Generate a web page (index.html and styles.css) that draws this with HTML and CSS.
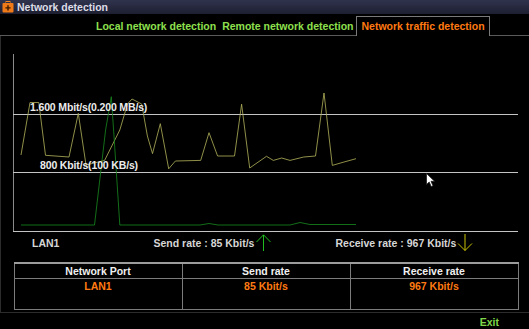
FILE: index.html
```html
<!DOCTYPE html>
<html>
<head>
<meta charset="utf-8">
<link rel="stylesheet" href="styles.css">
</head>
<body>
<div class="screen">
  <div class="titlebar">
    <svg class="app-icon" viewBox="0 0 12 12" width="12" height="12">
      <rect x="4" y="0.5" width="4" height="2" fill="none" stroke="#f08020"/>
      <rect x="0.5" y="2" width="11" height="9.5" rx="1" fill="#f07a18"/>
      <path d="M6 4.3v5.2M3.4 6.9h5.2" stroke="#3a1800" stroke-width="1.4"/>
    </svg>
    <span class="title">Network detection</span>
  </div>
  <div class="tabs">
    <div class="tab-lead"></div>
    <div class="tab">Local network detection</div>
    <div class="tab">Remote network detection</div>
    <div class="tab active">Network traffic detection</div>
    <div class="tab-fill"></div>
  </div>
  <div class="panel">
    <svg class="chart" viewBox="0 36 529 198" width="529" height="198">
      <line x1="13.5" y1="54" x2="13.5" y2="231" stroke="#8a8a8a"/>
      <line x1="13" y1="114.5" x2="518" y2="114.5" stroke="#c4c4c4"/>
      <line x1="13" y1="172.5" x2="518" y2="172.5" stroke="#c4c4c4"/>
      <line x1="13" y1="231.5" x2="518" y2="231.5" stroke="#c4c4c4"/>
      <polyline class="recv-line" points="21,155 30,102.5 38.8,102.5 45.5,155.3 69,157 78.3,113.3 86,165 104.6,160.4 119.8,130 127.5,104 132,99 141.7,104 147.4,136 152.5,153.6 160.3,123.7 168.7,168.8 175.4,161 200.7,160.4 209,132.7 217.6,156 234.5,156 241.6,104.2 249.7,168 266.5,156.3 273.3,160.4 281.7,158 290,160.4 303.7,157 315.5,156 324,93 332.3,165.4 344,162 356,158.7"/>
      <polyline class="send-line" points="21,225 94.5,225 105.6,130 111.3,96.7 114,136 119.8,225 200,225 209,223.5 218,225 290,225 300,222.5 310,224.5 356,224.5"/>
      <text class="scale" x="30" y="111">1.600 Mbit/s(0.200 MB/s)</text>
      <text class="scale" x="40" y="169">800 Kbit/s(100 KB/s)</text>
    </svg>
    <div class="stats">
      <span class="stat stat-port">LAN1</span>
      <span class="stat stat-send">Send rate : 85 Kbit/s<svg class="arrow" viewBox="0 0 17 17" width="17" height="17"><path d="M8.5 1V17M1.5 8L8.5 0.8L15.5 8" fill="none" stroke="#22d022" stroke-width="0.9"/></svg></span>
      <span class="stat stat-recv">Receive rate : 967 Kbit/s<svg class="arrow" viewBox="0 0 17 17" width="17" height="17"><path d="M8 0V16.5M1 9.5L8 16.5L15 9.5" fill="none" stroke="#e0d800" stroke-width="0.9"/></svg></span>
    </div>
    <table class="rates">
      <thead>
        <tr><th>Network Port</th><th>Send rate</th><th>Receive rate</th></tr>
      </thead>
      <tbody>
        <tr><td>LAN1</td><td>85 Kbit/s</td><td>967 Kbit/s</td></tr>
      </tbody>
    </table>
  </div>
  <div class="footer"><span class="exit">Exit</span></div>
  <svg class="cursor" viewBox="0 0 10 15" width="10" height="15">
    <path d="M0.5 0.5L0.5 11.5L3.2 9L5.2 13.6L7 12.8L5 8.3L8.6 8.3Z" fill="#ffffff" stroke="#202020" stroke-width="0.8"/>
  </svg>
</div>
</body>
</html>
```
FILE: styles.css
```css
html, body {
  margin: 0;
  padding: 0;
  background: #000;
}
.screen {
  position: relative;
  width: 529px;
  height: 329px;
  overflow: hidden;
  background: #000;
  font: bold 10.5px "Liberation Sans", Arial, sans-serif;
  color: #e0e0e0;
}
.titlebar {
  height: 14px;
  display: flex;
  align-items: center;
  background: linear-gradient(#30334d, #1d1f31);
}
.app-icon {
  display: block;
  margin-left: 2px;
}
.title {
  margin-left: 3px;
  color: #dcdce6;
  line-height: 14px;
}
.tabs {
  display: flex;
  height: 22px;
  align-items: flex-end;
}
.tab-lead {
  width: 93px;
  height: 20px;
  box-sizing: border-box;
  border-bottom: 1px solid #5a5a5a;
}
.tab {
  height: 20px;
  box-sizing: border-box;
  padding: 0 3px;
  line-height: 20px;
  color: #8fe04e;
  border-bottom: 1px solid #5a5a5a;
  white-space: nowrap;
}
.tab.active {
  color: #ff7a12;
  padding: 0 4px;
  border: 1px solid #7a7a7a;
  border-bottom: none;
  line-height: 19px;
}
.tab-fill {
  flex: 1;
  height: 20px;
  box-sizing: border-box;
  border-bottom: 1px solid #5a5a5a;
}
.panel {
  height: 276px;
  box-sizing: content-box;
  border-left: 1px solid #2c2c2c;
  border-bottom: 1px solid #2c2c2c;
}
.chart {
  display: block;
  margin-left: -1px;
}
.recv-line {
  fill: none;
  stroke: #b4b45c;
  stroke-width: 0.8;
}
.send-line {
  fill: none;
  stroke: #188a1e;
  stroke-width: 0.8;
}
.scale {
  fill: #ececec;
  font: bold 10.5px "Liberation Sans", Arial, sans-serif;
  letter-spacing: -0.15px;
}
.stats {
  display: flex;
  height: 17px;
  align-items: center;
  color: #d6d6d6;
  margin-left: -1px;
}
.stat {
  display: flex;
  align-items: center;
  white-space: nowrap;
}
.stat-port {
  margin-left: 32px;
  width: 121.5px;
}
.stat-send {
  width: 182px;
}
.arrow {
  display: block;
  margin-left: 1px;
}
.rates {
  margin: 11px 0 0 12.5px;
  width: 505px;
  border-collapse: collapse;
  table-layout: fixed;
}
.rates th {
  height: 14px;
  padding: 0;
  line-height: 13px;
  font-weight: bold;
  color: #f0f0f0;
  border: 1px solid #7c7c7c;
  border-top: 2px solid #9c9c9c;
  text-align: center;
}
.rates td {
  height: 30px;
  padding: 0;
  line-height: 14px;
  vertical-align: top;
  text-align: center;
  color: #ff7a12;
  border: 1px solid #7c7c7c;
}
.footer {
  display: flex;
  justify-content: flex-end;
  height: 16px;
  padding-right: 30px;
}
.exit {
  color: #7fd84a;
  line-height: 18px;
}
.cursor {
  position: absolute;
  left: 426px;
  top: 173px;
}
```
